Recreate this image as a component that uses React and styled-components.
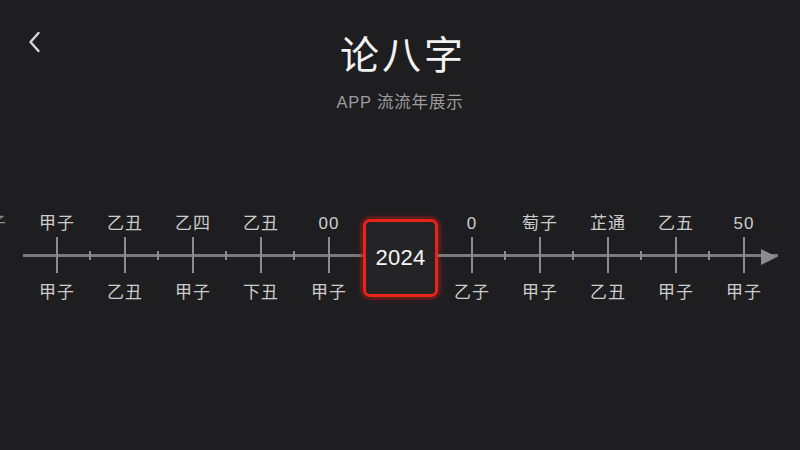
import React from 'react'
import styled, { createGlobalStyle } from 'styled-components'

const GlobalStyle = createGlobalStyle`
	html, body {
		margin: 0;
		padding: 0;
		background: #1e1e21;
	}
	body {
		font-family: "Liberation Sans", "Noto Sans CJK SC", sans-serif;
	}
`

const Page = styled.div`
	width: 800px;
	height: 450px;
	overflow: hidden;
	background: #1e1e21;
	color: #e8e8e8;
`

const Header = styled.header`
	display: grid;
	grid-template-columns: 80px 1fr 80px;
	padding-top: 29px;
`

const BackButton = styled.button`
	width: 24px;
	height: 26px;
	margin: 0 0 0 22px;
	padding: 0;
	border: none;
	background: none;
	color: #d8d8d8;
	display: flex;
	align-items: center;
	justify-content: center;
`

const TitleBlock = styled.div`
	display: flex;
	flex-direction: column;
	align-items: center;
`

const Title = styled.h1`
	margin: 0 0 0 6px;
	font-family: "Noto Sans CJK SC", sans-serif;
	font-weight: 400;
	font-size: 39px;
	line-height: 46px;
	letter-spacing: 3px;
	color: #f2f2f2;
`

const Subtitle = styled.p`
	margin: 17px 0 0;
	font-family: "Liberation Sans", "Noto Sans CJK SC", sans-serif;
	font-size: 16.5px;
	line-height: 20px;
	color: #9c9c9c;
	letter-spacing: 0.8px;
`

const Timeline = styled.div`
	display: flex;
	align-items: flex-start;
	margin-top: 101px;
	padding-left: 23px;
`

const Column = styled.div`
	width: 68px;
	flex: none;
	display: flex;
	flex-direction: column;
	align-items: center;
	margin-left: ${(p) => (p.$ghost ? '-68px' : '0')};
`

const Label = styled.span`
	height: 22px;
	line-height: 22px;
	font-family: "Liberation Sans", "Noto Sans CJK SC", sans-serif;
	font-size: 17px;
	color: ${(p) => (p.$ghost ? '#8a8a8a' : '#cdcdcd')};
	white-space: nowrap;
	letter-spacing: 1px;
`

const TickArea = styled.div`
	width: 100%;
	height: 36px;
	margin: 2px 0 9px;
	visibility: ${(p) => (p.$ghost ? 'hidden' : 'visible')};
	background:
		linear-gradient(#8c8c8c, #8c8c8c) center / 2px 100% no-repeat,
		${(p) =>
			p.$minor
				? 'linear-gradient(#8c8c8c, #8c8c8c) right center / 2px 9px no-repeat,'
				: ''}
		linear-gradient(#7a7a7a, #7a7a7a) center / 100% 3px no-repeat;
`

const CurrentYear = styled.div`
	width: 75px;
	height: 78px;
	flex: none;
	box-sizing: border-box;
	margin-top: 6px;
	border: 3.5px solid #e8241b;
	border-radius: 7px;
	background: #242427;
	box-shadow: 0 0 0 3px rgba(150, 28, 28, 0.35), 0 0 8px rgba(200, 30, 30, 0.45);
	display: flex;
	align-items: center;
	justify-content: center;
	font-family: "Liberation Sans", sans-serif;
	font-size: 22px;
	color: #f6f6f6;
	letter-spacing: 0.3px;
`

const ArrowHead = styled.div`
	flex: none;
	width: 0;
	height: 0;
	margin: 36px 0 0 -17px;
	border-top: 8px solid transparent;
	border-bottom: 8px solid transparent;
	border-left: 16px solid #8c8c8c;
`

const before = [
	{ top: '甲子', bottom: '甲子' },
	{ top: '乙丑', bottom: '乙丑' },
	{ top: '乙四', bottom: '甲子' },
	{ top: '乙丑', bottom: '下丑' },
	{ top: '00', bottom: '甲子' },
]

const after = [
	{ top: '0', bottom: '乙子' },
	{ top: '萄子', bottom: '甲子' },
	{ top: '芷通', bottom: '乙丑' },
	{ top: '乙五', bottom: '甲子' },
	{ top: '50', bottom: '甲子' },
]

function Tick({ item, minor, ghost }) {
	return (
		<Column $ghost={ghost}>
			<Label $ghost={ghost}>{item.top}</Label>
			<TickArea $minor={minor} $ghost={ghost} />
			{!ghost && <Label>{item.bottom}</Label>}
		</Column>
	)
}

export default function App() {
	return (
		<Page>
			<GlobalStyle />
			<Header>
				<BackButton aria-label='back'>
					<svg width='14' height='24' viewBox='0 0 14 24' fill='none'>
						<path
							d='M11.5 3 L3.5 12 L11.5 21'
							stroke='#d8d8d8'
							strokeWidth='2.4'
							strokeLinecap='round'
							strokeLinejoin='round'
						/>
					</svg>
				</BackButton>
				<TitleBlock>
					<Title>论八字</Title>
					<Subtitle>APP 流流年展示</Subtitle>
				</TitleBlock>
			</Header>
			<Timeline>
				<Tick item={{ top: '甲子', bottom: '' }} ghost />
				{before.map((item, i) => (
					<Tick key={'b' + i} item={item} minor={i < before.length - 1} />
				))}
				<CurrentYear>2024</CurrentYear>
				{after.map((item, i) => (
					<Tick key={'a' + i} item={item} minor={i < after.length - 1} />
				))}
				<ArrowHead />
			</Timeline>
		</Page>
	)
}
